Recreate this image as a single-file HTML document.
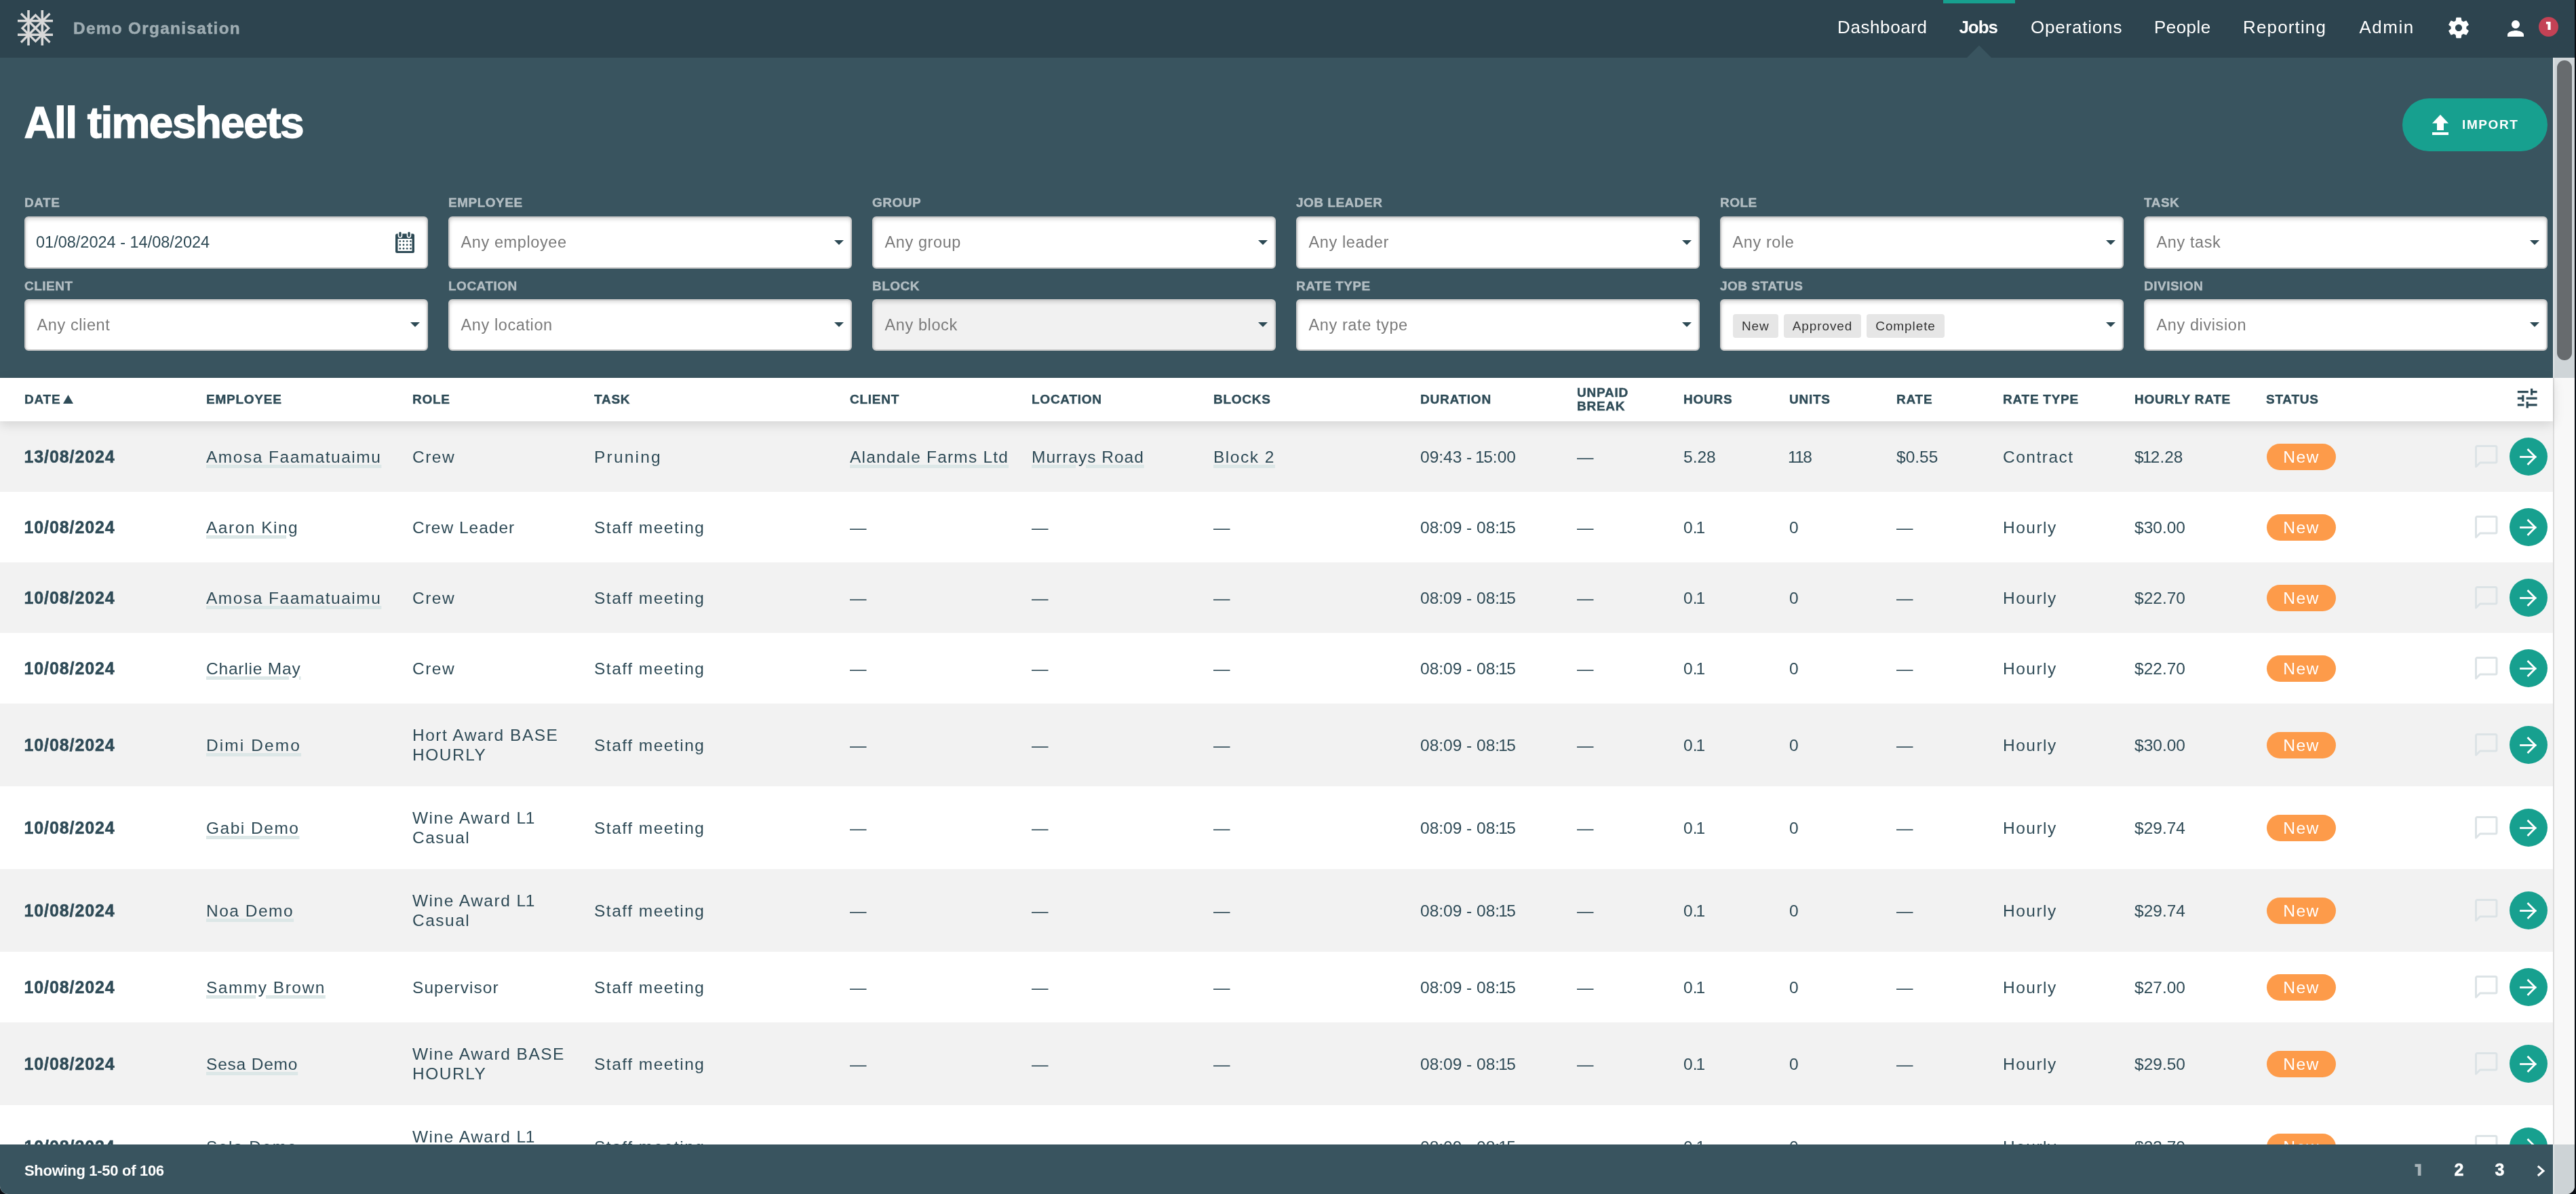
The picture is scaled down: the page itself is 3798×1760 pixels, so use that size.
<!DOCTYPE html><html><head><meta charset="utf-8"><title>All timesheets</title><style>
*{box-sizing:border-box;margin:0;padding:0}
html,body{width:3798px;height:1760px;overflow:hidden;background:#0a0e14}
body{font-family:"Liberation Sans",sans-serif;position:relative}
.app{position:absolute;left:0;top:0;width:3796px;height:1760px;overflow:hidden;border-radius:0 0 12px 12px;background:#fff;will-change:transform}
.abs{position:absolute;white-space:nowrap}
.hdr{position:absolute;left:0;top:0;width:3796px;height:85px;background:#2d444f}
.panel{position:absolute;left:0;top:85px;width:3764px;height:472px;background:#39545f}
.nav{position:absolute;top:-2px;height:85px;line-height:85px;font-size:26px;color:#fff;letter-spacing:0.6px}
.lbl{position:absolute;font-size:19px;font-weight:700;color:#b3bec3;letter-spacing:0.5px;line-height:20px;-webkit-text-stroke:0.4px #b3bec3}
.inp{position:absolute;width:595px;background:#fff;border:2px solid #c8c8c8;border-radius:6px;box-shadow:inset 0 5px 6px -3px rgba(0,0,0,0.16), inset 4px 0 5px -4px rgba(0,0,0,0.12), inset -4px 0 5px -4px rgba(0,0,0,0.06)}
.inp .ph{position:absolute;left:16.5px;top:0;bottom:0;display:flex;align-items:center;font-size:23.5px;color:#7a7a7a;letter-spacing:0.6px}
.caret{position:absolute;right:10px;top:50%;margin-top:-4px;width:0;height:0;border-left:7px solid transparent;border-right:7px solid transparent;border-top:7px solid #2d4a55}
.tag{display:inline-block;height:35px;line-height:35px;padding:0 13px;background:#e6e6e6;border-radius:4px;font-size:19px;color:#333;margin-right:8px;letter-spacing:0.9px}
.thead{position:absolute;left:0;top:557px;width:3764px;height:64px;background:#fff;z-index:2;box-shadow:0 5px 16px rgba(0,0,0,0.13)}
.th{position:absolute;top:0;height:64px;display:flex;align-items:center;font-size:19px;font-weight:700;color:#2f4c58;letter-spacing:0.75px;line-height:20px;-webkit-text-stroke:0.4px #2f4c58}
.rows{position:absolute;left:0;top:621px;width:3764px;height:1066px;overflow:hidden}
.row{position:relative;width:3764px}
.row.g{background:#f2f2f2}
.td{position:absolute;top:0;height:100%;display:flex;align-items:center;font-size:24.5px;color:#2f4b57;letter-spacing:1.5px;line-height:29px;white-space:nowrap}
.td.n{letter-spacing:0}
.o{font-style:normal;letter-spacing:-1.5px;margin-left:-2px}
.td.b{font-weight:700;font-size:25px;letter-spacing:0.9px;-webkit-text-stroke:0.5px #2f4b57}
.lnk{text-decoration:underline;text-decoration-color:#dce7e7;text-decoration-thickness:5px;text-underline-offset:3px}
.badge{width:102px;height:39px;border-radius:20px;background:#fd9b4a;color:#fff;font-size:24.7px;letter-spacing:1.4px;display:flex;align-items:center;justify-content:center}
.arrow{position:absolute;left:3700px;width:56px;height:56px;border-radius:50%;background:#17a08f}
.cmt{position:absolute;left:3649px}
.foot{position:absolute;left:0;top:1687px;width:3764px;height:73px;background:#39545f}
.track{position:absolute;left:3764px;width:32px}
</style></head><body><div class="app"><div class="hdr"><svg class="abs" style="left:0;top:0" width="100" height="85" viewBox="0 0 100 85"><g stroke="#d9d9d9" fill="none"><line x1="42" y1="15" x2="42" y2="67" stroke-width="3.6"/><line x1="62.3" y1="15" x2="62.3" y2="67" stroke-width="3.6"/><line x1="26" y1="30.8" x2="78" y2="30.8" stroke-width="3.6"/><line x1="26" y1="51.3" x2="78" y2="51.3" stroke-width="3.6"/><line x1="31" y1="20" x2="73.5" y2="62.5" stroke-width="3.2"/><line x1="73.5" y1="20" x2="31" y2="62.5" stroke-width="3.2"/><polygon points="52.4,22.3 71.8,41.4 52.4,60.8 33,41.4" stroke-width="3.2" stroke-linejoin="miter"/></g></svg><div class="abs" style="left:108px;top:-1px;height:85px;line-height:85px;font-size:24.3px;font-weight:700;color:#9eacb2;letter-spacing:1.35px;-webkit-text-stroke:0.5px #9eacb2">Demo Organisation</div><div class="nav" style="left:2709px;font-weight:400;letter-spacing:0.6px">Dashboard</div><div class="nav" style="left:2888.5px;font-weight:700;letter-spacing:-1.1px">Jobs</div><div class="nav" style="left:2994px;font-weight:400;letter-spacing:0.8px">Operations</div><div class="nav" style="left:3176px;font-weight:400;letter-spacing:0.45px">People</div><div class="nav" style="left:3307px;font-weight:400;letter-spacing:1.15px">Reporting</div><div class="nav" style="left:3478.5px;font-weight:400;letter-spacing:1.5px">Admin</div><div class="abs" style="left:2865px;top:0;width:106px;height:5px;background:#17a08f"></div><svg class="abs" style="left:2898px;top:66px" width="40" height="20" viewBox="0 0 40 20"><polygon points="2,19 20,1 38,19" fill="#39545f"/></svg><svg class="abs" style="left:3605.5px;top:21.5px" width="38" height="38" viewBox="0 0 24 24"><path fill="#fff" d="M19.14 12.94c.04-.3.06-.61.06-.94 0-.32-.02-.64-.07-.94l2.03-1.58c.18-.14.23-.41.12-.61l-1.92-3.32c-.12-.22-.37-.29-.59-.22l-2.39.96c-.5-.38-1.03-.7-1.62-.94l-.36-2.54c-.04-.24-.24-.41-.48-.41h-3.84c-.24 0-.43.17-.47.41l-.36 2.54c-.59.24-1.13.57-1.62.94l-2.39-.96c-.22-.08-.47 0-.59.22L2.74 8.87c-.12.21-.08.47.12.61l2.03 1.58c-.05.3-.09.63-.09.94s.02.64.07.94l-2.03 1.58c-.18.14-.23.41-.12.61l1.92 3.32c.12.22.37.29.59.22l2.39-.96c.5.38 1.03.7 1.62.94l.36 2.54c.05.24.24.41.48.41h3.84c.24 0 .44-.17.47-.41l.36-2.54c.59-.24 1.13-.56 1.62-.94l2.39.96c.22.08.47 0 .59-.22l1.92-3.32c.12-.22.07-.47-.12-.61l-2.01-1.58zM12 15.2c-1.76 0-3.2-1.44-3.2-3.2s1.44-3.2 3.2-3.2 3.2 1.44 3.2 3.2-1.44 3.2-3.2 3.2z"/></svg><svg class="abs" style="left:3691px;top:23.5px" width="36" height="36" viewBox="0 0 24 24"><path fill="#fff" d="M12 12c2.21 0 4-1.79 4-4s-1.79-4-4-4-4 1.79-4 4 1.79 4 4 4zm0 2c-2.67 0-8 1.34-8 4v2h16v-2c0-2.66-5.33-4-8-4z"/></svg><svg class="abs" style="left:3743px;top:25px" width="29" height="29" viewBox="0 0 29 29"><circle cx="14.5" cy="14.5" r="14.5" fill="#c44255"/><polygon points="10.9,7.1 17.6,7.1 17.6,19 13.4,19 13.4,10.6 10.9,10.6" fill="#fff"/></svg></div><div class="panel"><div class="abs" style="left:35.5px;top:56px;height:80px;line-height:80px;font-size:64px;font-weight:700;color:#fff;letter-spacing:-1.6px;-webkit-text-stroke:1.3px #fff">All timesheets</div><div class="abs" style="left:3542px;top:60px;width:214px;height:78px;border-radius:39px;background:#17a08f"><svg class="abs" style="left:44px;top:24px" width="24" height="30" viewBox="0 0 24 30"><polygon points="12,0 24,12.8 17,12.8 17,23 7,23 7,12.8 0,12.8" fill="#fff"/><rect x="0" y="26" width="24" height="4" fill="#fff"/></svg><div class="abs" style="left:88px;top:0;height:78px;line-height:78px;font-size:19px;font-weight:700;color:#fff;letter-spacing:1.6px">IMPORT</div></div><div class="lbl" style="left:36px;top:203.5px">DATE</div><div class="inp" style="left:36px;top:234px;height:77px;background:#fff"><div class="ph" style="left:15px;color:#2f4a55;letter-spacing:0">01/08/2024 - 14/08/2024</div><svg class="abs" style="left:544px;top:19.5px" width="30" height="33" viewBox="0 0 30 33"><rect x="1" y="3.5" width="28" height="28.5" rx="2.5" fill="#2d4a55"/><rect x="4.5" y="11" width="21" height="18" fill="#fff"/><rect x="5.5" y="0" width="5" height="9" rx="2.5" fill="#2d4a55" stroke="#fff" stroke-width="1.6"/><rect x="18.5" y="0" width="5" height="9" rx="2.5" fill="#2d4a55" stroke="#fff" stroke-width="1.6"/><circle cx="7.8" cy="14.5" r="1.35" fill="#2d4a55"/><circle cx="13.0" cy="14.5" r="1.35" fill="#2d4a55"/><circle cx="18.2" cy="14.5" r="1.35" fill="#2d4a55"/><circle cx="23.4" cy="14.5" r="1.35" fill="#2d4a55"/><circle cx="7.8" cy="19.9" r="1.35" fill="#2d4a55"/><circle cx="13.0" cy="19.9" r="1.35" fill="#2d4a55"/><circle cx="18.2" cy="19.9" r="1.35" fill="#2d4a55"/><circle cx="23.4" cy="19.9" r="1.35" fill="#2d4a55"/><circle cx="7.8" cy="25.3" r="1.35" fill="#2d4a55"/><circle cx="13.0" cy="25.3" r="1.35" fill="#2d4a55"/><circle cx="18.2" cy="25.3" r="1.35" fill="#2d4a55"/><circle cx="23.4" cy="25.3" r="1.35" fill="#2d4a55"/></svg></div><div class="lbl" style="left:661px;top:203.5px">EMPLOYEE</div><div class="inp" style="left:661px;top:234px;height:77px;background:#fff"><div class="ph">Any employee</div><div class="caret"></div></div><div class="lbl" style="left:1286px;top:203.5px">GROUP</div><div class="inp" style="left:1286px;top:234px;height:77px;background:#fff"><div class="ph">Any group</div><div class="caret"></div></div><div class="lbl" style="left:1911px;top:203.5px">JOB LEADER</div><div class="inp" style="left:1911px;top:234px;height:77px;background:#fff"><div class="ph">Any leader</div><div class="caret"></div></div><div class="lbl" style="left:2536px;top:203.5px">ROLE</div><div class="inp" style="left:2536px;top:234px;height:77px;background:#fff"><div class="ph">Any role</div><div class="caret"></div></div><div class="lbl" style="left:3161px;top:203.5px">TASK</div><div class="inp" style="left:3161px;top:234px;height:77px;background:#fff"><div class="ph">Any task</div><div class="caret"></div></div><div class="lbl" style="left:36px;top:326.5px">CLIENT</div><div class="inp" style="left:36px;top:356px;height:76px;background:#fff"><div class="ph">Any client</div><div class="caret"></div></div><div class="lbl" style="left:661px;top:326.5px">LOCATION</div><div class="inp" style="left:661px;top:356px;height:76px;background:#fff"><div class="ph">Any location</div><div class="caret"></div></div><div class="lbl" style="left:1286px;top:326.5px">BLOCK</div><div class="inp" style="left:1286px;top:356px;height:76px;background:#f1f1f1"><div class="ph">Any block</div><div class="caret"></div></div><div class="lbl" style="left:1911px;top:326.5px">RATE TYPE</div><div class="inp" style="left:1911px;top:356px;height:76px;background:#fff"><div class="ph">Any rate type</div><div class="caret"></div></div><div class="lbl" style="left:2536px;top:326.5px">JOB STATUS</div><div class="inp" style="left:2536px;top:356px;height:76px;background:#fff"><div class="abs" style="left:17px;top:20px"><span class="tag">New</span><span class="tag">Approved</span><span class="tag">Complete</span></div><div class="caret"></div></div><div class="lbl" style="left:3161px;top:326.5px">DIVISION</div><div class="inp" style="left:3161px;top:356px;height:76px;background:#fff"><div class="ph">Any division</div><div class="caret"></div></div></div><div class="thead"><div class="th" style="left:36px">DATE<svg style="margin-left:3.5px;margin-top:-1px" width="15" height="13" viewBox="0 0 15 13"><polygon points="7.5,0 15,13 0,13" fill="#2f4c58"/></svg></div><div class="th" style="left:304px">EMPLOYEE</div><div class="th" style="left:608px">ROLE</div><div class="th" style="left:876px">TASK</div><div class="th" style="left:1253px">CLIENT</div><div class="th" style="left:1521px">LOCATION</div><div class="th" style="left:1789px">BLOCKS</div><div class="th" style="left:2094px">DURATION</div><div class="th" style="left:2325px">UNPAID<br>BREAK</div><div class="th" style="left:2482px">HOURS</div><div class="th" style="left:2638px">UNITS</div><div class="th" style="left:2796px">RATE</div><div class="th" style="left:2953px">RATE TYPE</div><div class="th" style="left:3147px">HOURLY RATE</div><div class="th" style="left:3341px">STATUS</div><svg class="abs" style="left:3707px;top:10.5px" width="38.4" height="38.4" viewBox="0 0 24 24"><path fill="#2f4c58" d="M3 17v2h6v-2H3zM3 5v2h10V5H3zm10 16v-2h8v-2h-8v-2h-2v6h2zM7 9v2H3v2h4v2h2V9H7zm14 4v-2H11v2h10zm-6-4h2V7h4V5h-4V3h-2v6z"/></svg></div><div class="rows"><div class="row g" style="height:104px"><div class="td b" style="left:35.5px"><span>13/08/2024</span></div><div class="td" style="left:304px"><span class="lnk">Amosa Faamatuaimu</span></div><div class="td" style="left:608px"><span>Crew</span></div><div class="td" style="left:876px;letter-spacing:2.2px">Pruning</div><div class="td" style="left:1253px;letter-spacing:1.2px"><span class="lnk">Alandale Farms Ltd</span></div><div class="td" style="left:1521px;letter-spacing:1.0px"><span class="lnk">Murrays Road</span></div><div class="td" style="left:1789px"><span class="lnk">Block 2</span></div><div class="td n" style="left:2094px"><span>09:43 - <i class="o">1</i>5:00</span></div><div class="td" style="left:2325px">—</div><div class="td n" style="left:2482px"><span>5.28</span></div><div class="td n" style="left:2638px"><span><i class="o">1</i><i class="o">1</i>8</span></div><div class="td n" style="left:2796px"><span>$0.55</span></div><div class="td" style="left:2953px">Contract</div><div class="td n" style="left:3147px"><span>$<i class="o">1</i>2.28</span></div><div class="td" style="left:3342px"><div class="badge">New</div></div><div class="td" style="left:3648px"><svg width="35" height="34" viewBox="0 0 35 34"><path d="M2.5 32 V3.5 a2 2 0 0 1 2-2 H31 a2 2 0 0 1 2 2 V24 a2 2 0 0 1 -2 2 H8.5 Z" fill="none" stroke="#dce3e6" stroke-width="3" stroke-linejoin="round"/></svg></div><div class="arrow" style="top:24.0px"><svg class="abs" style="left:15px;top:16px" width="26" height="25" viewBox="0 0 26 25"><g stroke="#fff" stroke-width="2.8" fill="none" stroke-linecap="square"><line x1="1.5" y1="12.5" x2="23" y2="12.5"/><polyline points="12.5,2 23,12.5 12.5,23"/></g></svg></div></div><div class="row" style="height:104px"><div class="td b" style="left:35.5px"><span>10/08/2024</span></div><div class="td" style="left:304px"><span class="lnk">Aaron King</span></div><div class="td" style="left:608px;letter-spacing:1.0px"><span>Crew Leader</span></div><div class="td" style="left:876px">Staff meeting</div><div class="td" style="left:1253px">—</div><div class="td" style="left:1521px">—</div><div class="td" style="left:1789px">—</div><div class="td n" style="left:2094px"><span>08:09 - 08:<i class="o">1</i>5</span></div><div class="td" style="left:2325px">—</div><div class="td n" style="left:2482px"><span>0.<i class="o">1</i></span></div><div class="td n" style="left:2638px"><span>0</span></div><div class="td n" style="left:2796px"><span>—</span></div><div class="td" style="left:2953px">Hourly</div><div class="td n" style="left:3147px"><span>$30.00</span></div><div class="td" style="left:3342px"><div class="badge">New</div></div><div class="td" style="left:3648px"><svg width="35" height="34" viewBox="0 0 35 34"><path d="M2.5 32 V3.5 a2 2 0 0 1 2-2 H31 a2 2 0 0 1 2 2 V24 a2 2 0 0 1 -2 2 H8.5 Z" fill="none" stroke="#dce3e6" stroke-width="3" stroke-linejoin="round"/></svg></div><div class="arrow" style="top:24.0px"><svg class="abs" style="left:15px;top:16px" width="26" height="25" viewBox="0 0 26 25"><g stroke="#fff" stroke-width="2.8" fill="none" stroke-linecap="square"><line x1="1.5" y1="12.5" x2="23" y2="12.5"/><polyline points="12.5,2 23,12.5 12.5,23"/></g></svg></div></div><div class="row g" style="height:104px"><div class="td b" style="left:35.5px"><span>10/08/2024</span></div><div class="td" style="left:304px"><span class="lnk">Amosa Faamatuaimu</span></div><div class="td" style="left:608px"><span>Crew</span></div><div class="td" style="left:876px">Staff meeting</div><div class="td" style="left:1253px">—</div><div class="td" style="left:1521px">—</div><div class="td" style="left:1789px">—</div><div class="td n" style="left:2094px"><span>08:09 - 08:<i class="o">1</i>5</span></div><div class="td" style="left:2325px">—</div><div class="td n" style="left:2482px"><span>0.<i class="o">1</i></span></div><div class="td n" style="left:2638px"><span>0</span></div><div class="td n" style="left:2796px"><span>—</span></div><div class="td" style="left:2953px">Hourly</div><div class="td n" style="left:3147px"><span>$22.70</span></div><div class="td" style="left:3342px"><div class="badge">New</div></div><div class="td" style="left:3648px"><svg width="35" height="34" viewBox="0 0 35 34"><path d="M2.5 32 V3.5 a2 2 0 0 1 2-2 H31 a2 2 0 0 1 2 2 V24 a2 2 0 0 1 -2 2 H8.5 Z" fill="none" stroke="#dce3e6" stroke-width="3" stroke-linejoin="round"/></svg></div><div class="arrow" style="top:24.0px"><svg class="abs" style="left:15px;top:16px" width="26" height="25" viewBox="0 0 26 25"><g stroke="#fff" stroke-width="2.8" fill="none" stroke-linecap="square"><line x1="1.5" y1="12.5" x2="23" y2="12.5"/><polyline points="12.5,2 23,12.5 12.5,23"/></g></svg></div></div><div class="row" style="height:104px"><div class="td b" style="left:35.5px"><span>10/08/2024</span></div><div class="td" style="left:304px;letter-spacing:0.8px"><span class="lnk">Charlie May</span></div><div class="td" style="left:608px"><span>Crew</span></div><div class="td" style="left:876px">Staff meeting</div><div class="td" style="left:1253px">—</div><div class="td" style="left:1521px">—</div><div class="td" style="left:1789px">—</div><div class="td n" style="left:2094px"><span>08:09 - 08:<i class="o">1</i>5</span></div><div class="td" style="left:2325px">—</div><div class="td n" style="left:2482px"><span>0.<i class="o">1</i></span></div><div class="td n" style="left:2638px"><span>0</span></div><div class="td n" style="left:2796px"><span>—</span></div><div class="td" style="left:2953px">Hourly</div><div class="td n" style="left:3147px"><span>$22.70</span></div><div class="td" style="left:3342px"><div class="badge">New</div></div><div class="td" style="left:3648px"><svg width="35" height="34" viewBox="0 0 35 34"><path d="M2.5 32 V3.5 a2 2 0 0 1 2-2 H31 a2 2 0 0 1 2 2 V24 a2 2 0 0 1 -2 2 H8.5 Z" fill="none" stroke="#dce3e6" stroke-width="3" stroke-linejoin="round"/></svg></div><div class="arrow" style="top:24.0px"><svg class="abs" style="left:15px;top:16px" width="26" height="25" viewBox="0 0 26 25"><g stroke="#fff" stroke-width="2.8" fill="none" stroke-linecap="square"><line x1="1.5" y1="12.5" x2="23" y2="12.5"/><polyline points="12.5,2 23,12.5 12.5,23"/></g></svg></div></div><div class="row g" style="height:122px"><div class="td b" style="left:35.5px"><span>10/08/2024</span></div><div class="td" style="left:304px;letter-spacing:2.1px"><span class="lnk">Dimi Demo</span></div><div class="td" style="left:608px"><span>Hort Award BASE<br>HOURLY</span></div><div class="td" style="left:876px">Staff meeting</div><div class="td" style="left:1253px">—</div><div class="td" style="left:1521px">—</div><div class="td" style="left:1789px">—</div><div class="td n" style="left:2094px"><span>08:09 - 08:<i class="o">1</i>5</span></div><div class="td" style="left:2325px">—</div><div class="td n" style="left:2482px"><span>0.<i class="o">1</i></span></div><div class="td n" style="left:2638px"><span>0</span></div><div class="td n" style="left:2796px"><span>—</span></div><div class="td" style="left:2953px">Hourly</div><div class="td n" style="left:3147px"><span>$30.00</span></div><div class="td" style="left:3342px"><div class="badge">New</div></div><div class="td" style="left:3648px"><svg width="35" height="34" viewBox="0 0 35 34"><path d="M2.5 32 V3.5 a2 2 0 0 1 2-2 H31 a2 2 0 0 1 2 2 V24 a2 2 0 0 1 -2 2 H8.5 Z" fill="none" stroke="#dce3e6" stroke-width="3" stroke-linejoin="round"/></svg></div><div class="arrow" style="top:33.0px"><svg class="abs" style="left:15px;top:16px" width="26" height="25" viewBox="0 0 26 25"><g stroke="#fff" stroke-width="2.8" fill="none" stroke-linecap="square"><line x1="1.5" y1="12.5" x2="23" y2="12.5"/><polyline points="12.5,2 23,12.5 12.5,23"/></g></svg></div></div><div class="row" style="height:122px"><div class="td b" style="left:35.5px"><span>10/08/2024</span></div><div class="td" style="left:304px"><span class="lnk">Gabi Demo</span></div><div class="td" style="left:608px"><span>Wine Award L<i class=o>1</i><br>Casual</span></div><div class="td" style="left:876px">Staff meeting</div><div class="td" style="left:1253px">—</div><div class="td" style="left:1521px">—</div><div class="td" style="left:1789px">—</div><div class="td n" style="left:2094px"><span>08:09 - 08:<i class="o">1</i>5</span></div><div class="td" style="left:2325px">—</div><div class="td n" style="left:2482px"><span>0.<i class="o">1</i></span></div><div class="td n" style="left:2638px"><span>0</span></div><div class="td n" style="left:2796px"><span>—</span></div><div class="td" style="left:2953px">Hourly</div><div class="td n" style="left:3147px"><span>$29.74</span></div><div class="td" style="left:3342px"><div class="badge">New</div></div><div class="td" style="left:3648px"><svg width="35" height="34" viewBox="0 0 35 34"><path d="M2.5 32 V3.5 a2 2 0 0 1 2-2 H31 a2 2 0 0 1 2 2 V24 a2 2 0 0 1 -2 2 H8.5 Z" fill="none" stroke="#dce3e6" stroke-width="3" stroke-linejoin="round"/></svg></div><div class="arrow" style="top:33.0px"><svg class="abs" style="left:15px;top:16px" width="26" height="25" viewBox="0 0 26 25"><g stroke="#fff" stroke-width="2.8" fill="none" stroke-linecap="square"><line x1="1.5" y1="12.5" x2="23" y2="12.5"/><polyline points="12.5,2 23,12.5 12.5,23"/></g></svg></div></div><div class="row g" style="height:122px"><div class="td b" style="left:35.5px"><span>10/08/2024</span></div><div class="td" style="left:304px"><span class="lnk">Noa Demo</span></div><div class="td" style="left:608px"><span>Wine Award L<i class=o>1</i><br>Casual</span></div><div class="td" style="left:876px">Staff meeting</div><div class="td" style="left:1253px">—</div><div class="td" style="left:1521px">—</div><div class="td" style="left:1789px">—</div><div class="td n" style="left:2094px"><span>08:09 - 08:<i class="o">1</i>5</span></div><div class="td" style="left:2325px">—</div><div class="td n" style="left:2482px"><span>0.<i class="o">1</i></span></div><div class="td n" style="left:2638px"><span>0</span></div><div class="td n" style="left:2796px"><span>—</span></div><div class="td" style="left:2953px">Hourly</div><div class="td n" style="left:3147px"><span>$29.74</span></div><div class="td" style="left:3342px"><div class="badge">New</div></div><div class="td" style="left:3648px"><svg width="35" height="34" viewBox="0 0 35 34"><path d="M2.5 32 V3.5 a2 2 0 0 1 2-2 H31 a2 2 0 0 1 2 2 V24 a2 2 0 0 1 -2 2 H8.5 Z" fill="none" stroke="#dce3e6" stroke-width="3" stroke-linejoin="round"/></svg></div><div class="arrow" style="top:33.0px"><svg class="abs" style="left:15px;top:16px" width="26" height="25" viewBox="0 0 26 25"><g stroke="#fff" stroke-width="2.8" fill="none" stroke-linecap="square"><line x1="1.5" y1="12.5" x2="23" y2="12.5"/><polyline points="12.5,2 23,12.5 12.5,23"/></g></svg></div></div><div class="row" style="height:104px"><div class="td b" style="left:35.5px"><span>10/08/2024</span></div><div class="td" style="left:304px"><span class="lnk">Sammy Brown</span></div><div class="td" style="left:608px;letter-spacing:1.05px"><span>Supervisor</span></div><div class="td" style="left:876px">Staff meeting</div><div class="td" style="left:1253px">—</div><div class="td" style="left:1521px">—</div><div class="td" style="left:1789px">—</div><div class="td n" style="left:2094px"><span>08:09 - 08:<i class="o">1</i>5</span></div><div class="td" style="left:2325px">—</div><div class="td n" style="left:2482px"><span>0.<i class="o">1</i></span></div><div class="td n" style="left:2638px"><span>0</span></div><div class="td n" style="left:2796px"><span>—</span></div><div class="td" style="left:2953px">Hourly</div><div class="td n" style="left:3147px"><span>$27.00</span></div><div class="td" style="left:3342px"><div class="badge">New</div></div><div class="td" style="left:3648px"><svg width="35" height="34" viewBox="0 0 35 34"><path d="M2.5 32 V3.5 a2 2 0 0 1 2-2 H31 a2 2 0 0 1 2 2 V24 a2 2 0 0 1 -2 2 H8.5 Z" fill="none" stroke="#dce3e6" stroke-width="3" stroke-linejoin="round"/></svg></div><div class="arrow" style="top:24.0px"><svg class="abs" style="left:15px;top:16px" width="26" height="25" viewBox="0 0 26 25"><g stroke="#fff" stroke-width="2.8" fill="none" stroke-linecap="square"><line x1="1.5" y1="12.5" x2="23" y2="12.5"/><polyline points="12.5,2 23,12.5 12.5,23"/></g></svg></div></div><div class="row g" style="height:122px"><div class="td b" style="left:35.5px"><span>10/08/2024</span></div><div class="td" style="left:304px;letter-spacing:0.8px"><span class="lnk">Sesa Demo</span></div><div class="td" style="left:608px"><span>Wine Award BASE<br>HOURLY</span></div><div class="td" style="left:876px">Staff meeting</div><div class="td" style="left:1253px">—</div><div class="td" style="left:1521px">—</div><div class="td" style="left:1789px">—</div><div class="td n" style="left:2094px"><span>08:09 - 08:<i class="o">1</i>5</span></div><div class="td" style="left:2325px">—</div><div class="td n" style="left:2482px"><span>0.<i class="o">1</i></span></div><div class="td n" style="left:2638px"><span>0</span></div><div class="td n" style="left:2796px"><span>—</span></div><div class="td" style="left:2953px">Hourly</div><div class="td n" style="left:3147px"><span>$29.50</span></div><div class="td" style="left:3342px"><div class="badge">New</div></div><div class="td" style="left:3648px"><svg width="35" height="34" viewBox="0 0 35 34"><path d="M2.5 32 V3.5 a2 2 0 0 1 2-2 H31 a2 2 0 0 1 2 2 V24 a2 2 0 0 1 -2 2 H8.5 Z" fill="none" stroke="#dce3e6" stroke-width="3" stroke-linejoin="round"/></svg></div><div class="arrow" style="top:33.0px"><svg class="abs" style="left:15px;top:16px" width="26" height="25" viewBox="0 0 26 25"><g stroke="#fff" stroke-width="2.8" fill="none" stroke-linecap="square"><line x1="1.5" y1="12.5" x2="23" y2="12.5"/><polyline points="12.5,2 23,12.5 12.5,23"/></g></svg></div></div><div class="row" style="height:122px"><div class="td b" style="left:35.5px"><span>10/08/2024</span></div><div class="td" style="left:304px"><span class="lnk">Sola Demo</span></div><div class="td" style="left:608px"><span>Wine Award L<i class=o>1</i><br>Casual</span></div><div class="td" style="left:876px">Staff meeting</div><div class="td" style="left:1253px">—</div><div class="td" style="left:1521px">—</div><div class="td" style="left:1789px">—</div><div class="td n" style="left:2094px"><span>08:09 - 08:<i class="o">1</i>5</span></div><div class="td" style="left:2325px">—</div><div class="td n" style="left:2482px"><span>0.<i class="o">1</i></span></div><div class="td n" style="left:2638px"><span>0</span></div><div class="td n" style="left:2796px"><span>—</span></div><div class="td" style="left:2953px">Hourly</div><div class="td n" style="left:3147px"><span>$23.70</span></div><div class="td" style="left:3342px"><div class="badge">New</div></div><div class="td" style="left:3648px"><svg width="35" height="34" viewBox="0 0 35 34"><path d="M2.5 32 V3.5 a2 2 0 0 1 2-2 H31 a2 2 0 0 1 2 2 V24 a2 2 0 0 1 -2 2 H8.5 Z" fill="none" stroke="#dce3e6" stroke-width="3" stroke-linejoin="round"/></svg></div><div class="arrow" style="top:33.0px"><svg class="abs" style="left:15px;top:16px" width="26" height="25" viewBox="0 0 26 25"><g stroke="#fff" stroke-width="2.8" fill="none" stroke-linecap="square"><line x1="1.5" y1="12.5" x2="23" y2="12.5"/><polyline points="12.5,2 23,12.5 12.5,23"/></g></svg></div></div></div><div class="foot"><div class="abs" style="left:36px;top:1.5px;height:73px;line-height:73px;font-size:22px;font-weight:700;color:#fff;letter-spacing:-0.3px">Showing 1-50 of 106</div><svg class="abs" style="left:3558px;top:26px" width="14" height="22" viewBox="0 0 14 22"><polygon points="2.5,2.8 11.5,2.8 11.5,20 6.8,20 6.8,6.9 2.5,6.9" fill="#a7b3b8"/></svg><div class="abs" style="left:3618.5px;top:1px;height:73px;line-height:73px;font-size:25px;font-weight:700;color:#fff;-webkit-text-stroke:0.5px #fff">2</div><div class="abs" style="left:3678.5px;top:1px;height:73px;line-height:73px;font-size:25px;font-weight:700;color:#fff;-webkit-text-stroke:0.5px #fff">3</div><svg class="abs" style="left:3738px;top:29.5px" width="16" height="18" viewBox="0 0 16 18"><polyline points="3.8,1.8 12,8.9 3.8,16" fill="none" stroke="#fff" stroke-width="3"/></svg></div><div class="track" style="top:85px;height:472px;background:#cfd5d8;border-left:2px solid #e3e6e8"><div class="abs" style="left:4px;top:4px;width:22px;height:442px;border-radius:11px;background:#676b6e"></div></div><div class="track" style="top:557px;height:1130px;background:#f8f8f8;border-left:2px solid #dcdcdc"></div><div class="track" style="top:1687px;height:73px;background:#cdd3d6;border-left:2px solid #e3e6e8"></div></div></body></html>
